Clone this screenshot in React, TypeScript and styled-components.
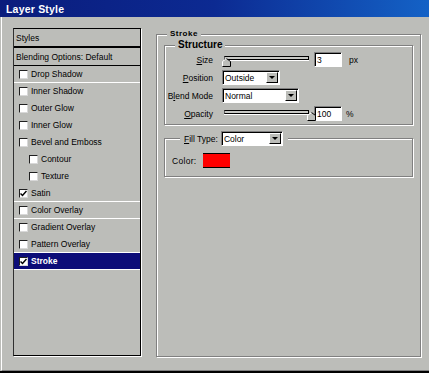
import React from "react";
import styled, { createGlobalStyle } from "styled-components";

const GlobalStyle = createGlobalStyle`
  html, body { margin:0; padding:0; background:#bcbdb9; }
  body { font-family:"Liberation Sans", Arial, sans-serif; color:#000; }
`

const Window = styled.div`
  width:429px;
  height:373px;
  box-sizing:border-box;
  display:flex;
  flex-direction:column;
  background:#bcbdb9;
  border-bottom:2px solid #000;
  overflow:hidden;
`

const TitleBar = styled.div`
  height:17px;
  flex:none;
  display:flex;
  align-items:center;
  padding-left:6px;
  background:linear-gradient(to right, #0a1c7c 0%, #0c2a92 50%, #1462c6 100%);
  color:#fff;
  font-weight:bold;
  font-size:10.5px;
  letter-spacing:0.2px;
`

const Body = styled.div`
  flex:1;
  display:flex;
  align-items:flex-start;
  gap:15px;
  margin-left:1px;
  padding:11px 0 0 11px;
  border-left:1px solid #fff;
  border-bottom:1px solid #808080;
`

const StyleList = styled.div`
  width:128px;
  height:328px;
  box-sizing:border-box;
  flex:none;
  display:flex;
  flex-direction:column;
  border:1px solid #000;
  border-left-color:#303030;
  box-shadow:1px 1px 0 #fff;
  font-size:8.5px;
`

const ListHead = styled.div<{ $line: number }>`
  height:${(p) => 17 + p.$line}px;
  box-sizing:border-box;
  display:flex;
  align-items:center;
  padding-left:2px;
  border-bottom:${(p) => p.$line}px solid #000;
`

const Row = styled.div<{ $indent?: boolean; $sep?: boolean; $active?: boolean }>`
  height:17px;
  box-sizing:border-box;
  display:flex;
  align-items:center;
  gap:3px;
  padding-left:${(p) => (p.$indent ? 15 : 5)}px;
  border-bottom:1px solid ${(p) => (p.$sep ? "#fff" : "transparent")};
  background:${(p) => (p.$active ? "#0c0c78" : "transparent")};
  color:${(p) => (p.$active ? "#fff" : "#000")};
  font-weight:${(p) => (p.$active ? "bold" : "normal")};
`

const Box = styled.span`
  width:9px;
  height:9px;
  box-sizing:border-box;
  flex:none;
  display:flex;
  align-items:center;
  justify-content:center;
  background:#fff;
  border:1px solid;
  border-color:#202020 #d8d8d8 #d8d8d8 #202020;
`

const Group = styled.fieldset<{ $pad: string }>`
  margin:0;
  padding:${(p) => p.$pad};
  min-inline-size:0;
  border:1px solid #808080;
  box-shadow:1px 1px 0 #fff, inset 1px 1px 0 #fff;
`

const StrokeGroup = styled(Group)`
  width:265px;
  height:328px;
  box-sizing:border-box;
  flex:none;
  margin-top:1px;
  display:flex;
  flex-direction:column;
  gap:6px;
`

const Legend = styled.legend<{ $size: number; $offset: number }>`
  margin-left:${(p) => p.$offset}px;
  padding:0 3px;
  font-size:${(p) => p.$size}px;
  line-height:${(p) => p.$size + 2}px;
  font-weight:bold;
  letter-spacing:${(p) => (p.$size < 9 ? 0.5 : 0)}px;
  background:#bcbdb9;
`

const FillLegend = styled.legend`
  margin-left:8px;
  padding:0 5px 0 4px;
  display:flex;
  align-items:center;
  gap:3px;
  font-size:8.5px;
  background:#bcbdb9;
`

const FormGrid = styled.div`
  display:grid;
  grid-template-columns:48px auto;
  grid-auto-rows:15px;
  column-gap:9px;
  row-gap:3px;
  align-items:center;
  font-size:8.5px;
`

const Label = styled.span`
  text-align:right;
  white-space:nowrap;
  u { text-decoration:underline; }
`

const Controls = styled.div`
  display:flex;
  align-items:center;
  height:15px;
`

const SliderWrap = styled.div`
  position:relative;
  width:92px;
  height:15px;
  flex:none;
`

const Track = styled.div`
  position:absolute;
  left:2px;
  right:5px;
  top:4px;
  height:4px;
  box-sizing:border-box;
  border:1px solid #000;
  border-left-color:#606060;
  background:#c8c9c5;
  box-shadow:0 1px 0 #fff;
`

const Thumb = styled.svg`
  position:absolute;
  top:6px;
  width:9px;
  height:9px;
`

const Field = styled.div<{ $w: number }>`
  width:${(p) => p.$w}px;
  height:15px;
  box-sizing:border-box;
  flex:none;
  display:flex;
  align-items:center;
  padding-left:2px;
  background:#fff;
  border:1px solid;
  border-color:#808080 #fff #fff #808080;
  box-shadow:inset 1px 1px 0 #000;
  font-size:8.5px;
`

const Unit = styled.span<{ $gap: number }>`
  margin-left:${(p) => p.$gap}px;
  font-size:8.5px;
`

const Select = styled(Field)<{ $shift?: number }>`
  justify-content:space-between;
  padding-right:1px;
  margin-left:${(p) => p.$shift ?? 0}px;
`

const DropBtn = styled.span`
  width:12px;
  height:11px;
  box-sizing:border-box;
  display:flex;
  align-items:center;
  justify-content:center;
  background:#bcbdb9;
  border:1px solid;
  border-color:#fff #000 #000 #fff;
  &::after{
    content:"";
    border-left:3px solid transparent;
    border-right:3px solid transparent;
    border-top:3px solid #000;
  }
`

const ColorRow = styled.div`
  display:flex;
  align-items:center;
  gap:7px;
  font-size:8.5px;
  letter-spacing:0.3px;
`

const Swatch = styled.span`
  width:27px;
  height:15px;
  box-sizing:border-box;
  background:#ff0000;
  border-top:1px solid #000;
  border-bottom:1px solid #000;
`

const Check = () => (
  <svg width="7" height="7" viewBox="0 0 7 7">
    <path d="M0.5 3.5 L2.5 5.5 L6.5 1" stroke="#000" strokeWidth="1.5" fill="none" />
  </svg>
)

const Slider = ({ value }: { value: number }) => (
  <SliderWrap>
    <Track />
    <Thumb viewBox="0 0 9 9" style={{ left: value * 0.85 }}>
      <polygon points="0.5,8.5 0.5,3.5 4.5,0.5 8.5,3.5 8.5,8.5" fill="#bcbdb9" />
      <polyline points="0.5,8.5 0.5,3.5 4.5,0.5" stroke="#fff" fill="none" />
      <polyline points="4.5,0.5 8.5,3.5 8.5,8.5 0.5,8.5" stroke="#000" fill="none" />
    </Thumb>
  </SliderWrap>
)

const styles = [
  { name: "Drop Shadow", sep: true },
  { name: "Inner Shadow" },
  { name: "Outer Glow" },
  { name: "Inner Glow" },
  { name: "Bevel and Emboss" },
  { name: "Contour", indent: true },
  { name: "Texture", indent: true },
  { name: "Satin", checked: true, sep: true },
  { name: "Color Overlay", sep: true },
  { name: "Gradient Overlay" },
  { name: "Pattern Overlay", sep: true },
  { name: "Stroke", checked: true, active: true, sep: true },
]

const App = () => {
  return (
    <Window>
      <GlobalStyle />
      <TitleBar>Layer Style</TitleBar>
      <Body>
        <StyleList>
          <ListHead $line={2}>Styles</ListHead>
          <ListHead $line={1}>Blending Options: Default</ListHead>
          {styles.map((s) => (
            <Row key={s.name} $indent={s.indent} $sep={s.sep} $active={s.active}>
              <Box>{s.checked ? <Check /> : null}</Box>
              {s.name}
            </Row>
          ))}
        </StyleList>

        <StrokeGroup $pad="0 7px">
          <Legend $size={8} $offset={3}>Stroke</Legend>
          <Group $pad="1px 0 3px 0">
            <Legend $size={10} $offset={10}>Structure</Legend>
            <FormGrid>
              <Label><u>S</u>ize</Label>
              <Controls>
                <Slider value={0} />
                <Field $w={28}>3</Field>
                <Unit $gap={7}>px</Unit>
              </Controls>
              <Label><u>P</u>osition</Label>
              <Controls>
                <Select $w={58}>Outside<DropBtn /></Select>
              </Controls>
              <Label>B<u>l</u>end Mode</Label>
              <Controls>
                <Select $w={77}>Normal<DropBtn /></Select>
              </Controls>
              <Label><u>O</u>pacity</Label>
              <Controls>
                <Slider value={100} />
                <Field $w={28}>100</Field>
                <Unit $gap={4}>%</Unit>
              </Controls>
            </FormGrid>
          </Group>
          <Group $pad="7px 0 8px 7px">
            <FillLegend>
              <span><u>F</u>ill Type:</span>
              <Select $w={62}>Color<DropBtn /></Select>
            </FillLegend>
            <ColorRow>
              Color:
              <Swatch />
            </ColorRow>
          </Group>
        </StrokeGroup>
      </Body>
    </Window>
  );
};

export default App;
